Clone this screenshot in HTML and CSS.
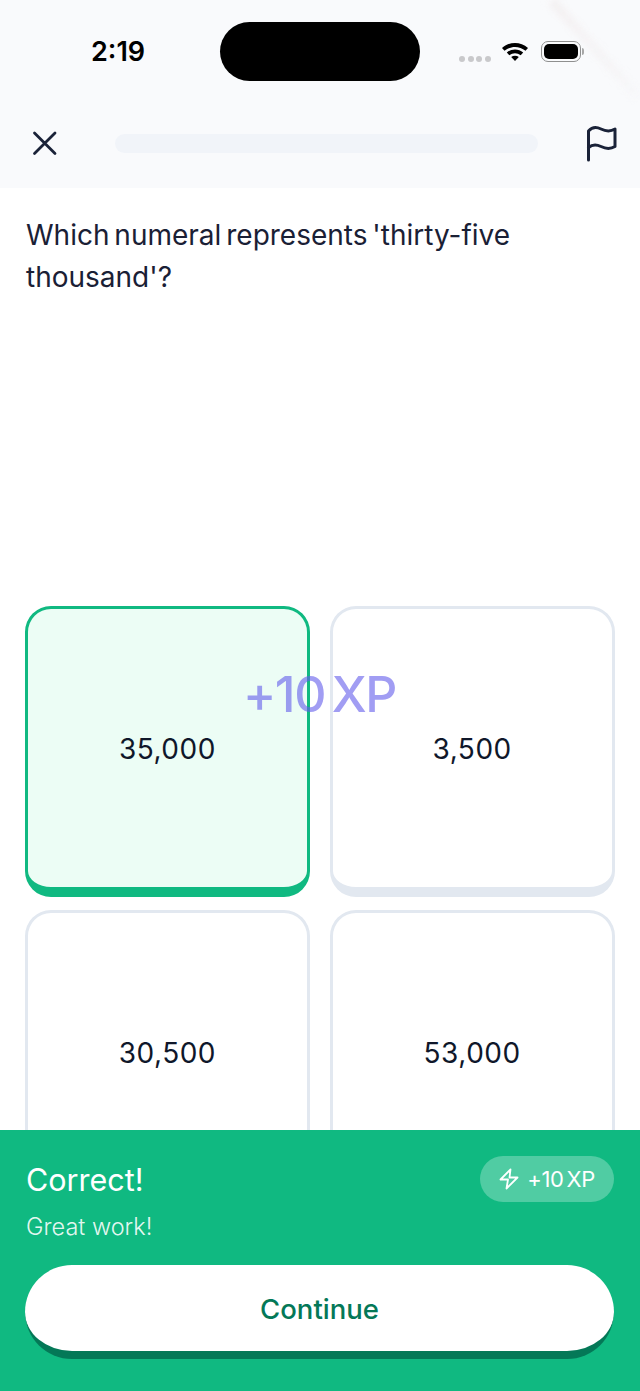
FILE: index.html
```html
<!DOCTYPE html>
<html lang="en">
<head>
    <meta charset="UTF-8">
    <meta name="viewport" content="width=device-width, initial-scale=1.0">
    <title>Lesson question</title>
    <link rel="stylesheet" href="styles.css">
</head>
<body>
    <div class="screen">
        <header class="top">
            <div class="status-bar">
                <span class="time">2:19</span>
                <div class="island"></div>
                <div class="status-icons">
                    <div class="signal"><i></i><i></i><i></i><i></i></div>
                    <svg class="wifi" width="28" height="20" viewBox="0 0 28 20">
                        <path d="M1 7C8.500 .2 19.500 .2 27 7L24.500 9.700C18.500 4.600 9.500 4.600 3.500 9.700Z" fill="#000"/>
                        <path d="M5.800 11.600C10.500 7.600 17.500 7.600 22.200 11.600L19.700 14.300C16.300 11.500 11.700 11.500 8.300 14.300Z" fill="#000"/>
                        <path d="M10.200 16C12.400 14.300 15.600 14.300 17.800 16L14 20Z" fill="#000"/>
                    </svg>
                    <div class="battery"><div class="battery-fill"></div></div>
                    <div class="battery-cap"></div>
                </div>
            </div>
            <div class="nav">
                <svg class="nav-icon" width="28" height="28" viewBox="0 0 28 28" fill="none" stroke="#1a2238" stroke-width="2.800" stroke-linecap="round">
                    <path d="M4.500 4L25 24.500M25 4L4.500 24.500"/>
                </svg>
                <div class="progress"></div>
                <svg class="nav-icon" width="32" height="37" viewBox="0 0 32 37" fill="none" stroke="#1a2238" stroke-width="3" stroke-linecap="round" stroke-linejoin="round">
                    <path d="M2.500 35V6C6 2 10 1.500 15 4C20 6.500 24 7 29 4V21.500C24 24.500 20 24 15 21.500C10 19 6 19.500 2.500 22.500"/>
                </svg>
            </div>
        </header>

        <main class="content">
            <h1 class="question">Which numeral represents 'thirty-five thousand'?</h1>
            <div class="answers">
                <button class="answer answer-correct">35,000</button>
                <button class="answer">3,500</button>
                <button class="answer">30,500</button>
                <button class="answer">53,000</button>
            </div>
        </main>

        <div class="streak"></div>
        <div class="xp-float">+10 XP</div>

        <footer class="sheet">
            <div class="sheet-head">
                <div>
                    <div class="sheet-title">Correct!</div>
                    <div class="sheet-sub">Great work!</div>
                </div>
                <div class="xp-pill">
                    <svg width="20" height="22" viewBox="0 0 20 22" fill="none" stroke="#fff" stroke-width="1.800" stroke-linecap="round" stroke-linejoin="round">
                        <path d="M11.500 1.500L1.500 11.500H9L7.500 20.500L18.500 9.500H10.500Z"/>
                    </svg>
                    <span>+10 XP</span>
                </div>
            </div>
            <button class="continue">Continue</button>
        </footer>
    </div>
</body>
</html>
```

FILE: styles.css
```css
* {
    margin: 0;
    padding: 0;
    box-sizing: border-box;
    font-family: Inter, "Noto Sans", sans-serif;
}

body {
    background-color: #fff;
}

.screen {
    position: relative;
    width: 640px;
    height: 1391px;
    overflow: hidden;
    background-color: #fff;
}

.top {
    height: 188px;
    background-color: #f9fafc;
}

.status-bar {
    height: 100px;
    padding: 22px 0 0 91px;
    display: flex;
    align-items: flex-start;
}

.time {
    width: 129px;
    margin-top: 15px;
    font-size: 27px;
    line-height: 30px;
    font-weight: 600;
    color: #000;
}

.island {
    width: 200px;
    height: 59px;
    border-radius: 30px;
    background-color: #000;
}

.status-icons {
    display: flex;
    align-items: center;
    margin: 19px 0 0 39px;
}

.signal {
    display: flex;
    gap: 2.500px;
    margin-top: 14px;
}

.signal i {
    width: 6px;
    height: 6px;
    border-radius: 50%;
    background-color: #c9c9cb;
}

.wifi {
    margin: -2px 0 0 10px;
}

.battery {
    width: 40px;
    height: 21px;
    margin-left: 12px;
    padding: 2px;
    border: 1.500px solid #8f8f8f;
    border-radius: 7px;
}

.battery-fill {
    height: 100%;
    border-radius: 5px;
    background-color: #000;
}

.battery-cap {
    width: 2px;
    height: 7px;
    margin-left: 1px;
    border-radius: 0 2px 2px 0;
    background-color: #a5a5a5;
}

.nav {
    display: flex;
    align-items: center;
    height: 88px;
    padding: 0 22px 0 30px;
    margin-top: -1px;
}

.progress {
    flex: 1;
    height: 19px;
    margin: 0 48px 0 57px;
    border-radius: 10px;
    background-color: #f1f4f9;
}

.content {
    padding: 26px 25.500px 0 25px;
}

.question {
    height: 392px;
    padding-left: 1px;
    font-size: 28px;
    line-height: 42px;
    font-weight: 400;
    word-spacing: -3px;
    color: #1a2035;
}

.answers {
    display: grid;
    grid-template-columns: 1fr 1fr;
    grid-auto-rows: 291px;
    column-gap: 20px;
    row-gap: 13px;
}

.answer {
    padding-top: 2px;
    border: 3px solid #e2e8f0;
    border-bottom-width: 10px;
    border-radius: 26px;
    background-color: #fff;
    font-size: 28px;
    font-weight: 400;
    letter-spacing: 0.500px;
    color: #0f172a;
}

.answer-correct {
    border-color: #10b981;
    background-color: #ecfdf5;
}

/* faint confetti streak in the corner */
.streak {
    position: absolute;
    left: 530px;
    top: 44px;
    width: 130px;
    height: 10px;
    transform: rotate(48deg);
    background: linear-gradient(90deg, rgba(244, 240, 241, 0.9), rgba(244, 244, 246, 0.4));
    filter: blur(3px);
}

.xp-float {
    position: absolute;
    left: 243px;
    top: 664px;
    font-size: 50px;
    line-height: 60px;
    font-weight: 500;
    letter-spacing: -1.500px;
    word-spacing: -5px;
    color: rgba(99, 91, 235, 0.6);
}

.sheet {
    position: absolute;
    left: 0;
    right: 0;
    bottom: 0;
    height: 261px;
    padding: 26px 26px 0 25px;
    background-color: #10b981;
}

.sheet-head {
    display: flex;
    justify-content: space-between;
    align-items: flex-start;
    height: 109px;
}

.sheet-title {
    margin: 4px 0 0 1px;
    font-size: 30.500px;
    line-height: 40px;
    font-weight: 400;
    color: #fff;
}

.sheet-sub {
    margin: 13px 0 0 1px;
    font-size: 23.500px;
    line-height: 28px;
    font-weight: 300;
    color: rgba(255, 255, 255, 0.9);
}

.xp-pill {
    display: flex;
    align-items: center;
    gap: 8px;
    height: 46px;
    padding: 0 19px;
    border-radius: 23px;
    background-color: rgba(255, 255, 255, 0.27);
    font-size: 22px;
    word-spacing: -3px;
    letter-spacing: -0.300px;
    color: #fff;
}

.continue {
    display: block;
    width: 100%;
    height: 94px;
    padding-top: 2px;
    border: 0;
    border-bottom: 8px solid #047857;
    border-radius: 47px;
    background-color: #fff;
    font-size: 27.500px;
    font-weight: 500;
    color: #047857;
}
```
